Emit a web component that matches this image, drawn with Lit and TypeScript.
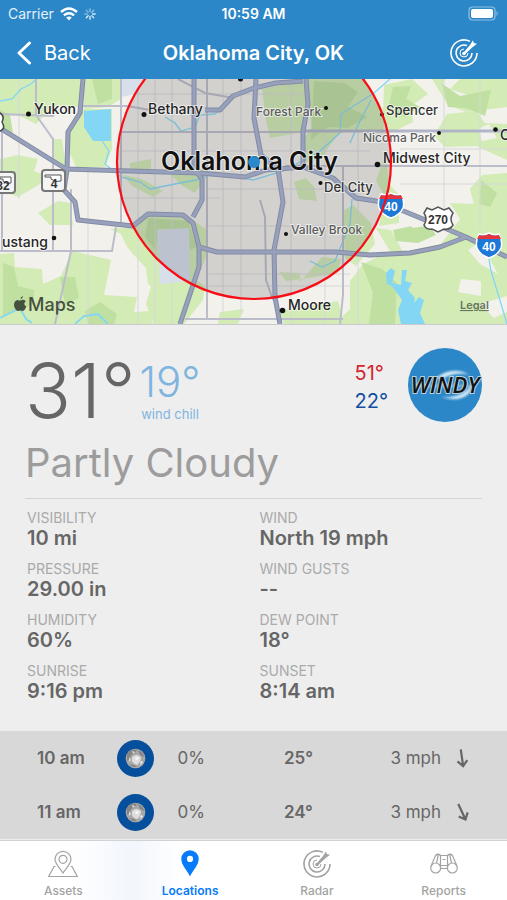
import { LitElement, html, svg, css } from "lit";
import { customElement, property } from "lit/decorators.js";

const radar = svg`
  <path d="M28 15A13 13 0 1 1 21 3.400" fill="none" stroke="currentColor" stroke-width="1.600"/>
  <path d="M23 15A8 8 0 1 1 18 7.600" fill="none" stroke="currentColor" stroke-width="1.600"/>
  <path d="M19 15A4 4 0 1 1 15 11" fill="none" stroke="currentColor" stroke-width="1"/>
  <path d="M14 15.200 21 7 24 2.300 24.800 5 28 5.800 23.500 9.300 15.600 16.500Z" fill="currentColor"/>
  <circle cx="15" cy="15.500" r="1.800" fill="currentColor"/>`;

const icons: Record<string, unknown> = {
  assets: svg`<g fill="none" stroke="currentColor" stroke-width="1.200">
    <path d="M15 24C12 19 7 15 7 10.300a8 8 0 0 1 16 0C23 15 18 19 15 24Z"/>
    <circle cx="15" cy="10.300" r="4"/>
    <path d="M7.500 17.500H6L.700 27.500H29.300L24 17.500H22.500"/></g>`,
  locations: svg`<path fill="currentColor" fill-rule="evenodd" d="M15 27.500C12.500 21.500 6.300 16.500 6.300 10a8.700 8.700 0 0 1 17.400 0C23.700 16.500 17.500 21.500 15 27.500ZM15 13a3.100 3.100 0 1 0 0-6.200A3.100 3.100 0 0 0 15 13Z"/>`,
  radar,
  reports: svg`<g fill="none" stroke="currentColor" stroke-width="1.200">
    <circle cx="6.700" cy="19" r="5"/><circle cx="23.300" cy="19" r="5"/>
    <path d="M2.300 16.500 6.500 6.500Q9 4 11.500 6.500V20M27.700 16.500 23.500 6.500Q21 4 18.500 6.500V20M11.500 6.500h7M11.500 19.500h7M11.500 16.500h7M9.300 6 7.500 14M20.700 6 22.500 14M13.500 10.500h3"/></g>`,
};

const highways = [
  "M0 49 66 90 130 92 200 94 245 98 266 91 303 88 333 99 356 119 376 122 406 133 466 158 507 178",
  "M83 0 80 34 68 53 67 91 64 111 75 123 78 141 133 147 148 135 183 136 193 144 199 168V188L180 245",
  "M194 0V90L202 100V121L193 138M205 31H220L233 17 254 9 276 4 303 2",
  "M256 0 254 39 261 76 278 90 283 123 274 171 275 218 280 245M306 0 308 26 303 52V88M199 168 217 173H336L370 176 410 174 440 168 466 158",
];

@customElement("area-map")
class AreaMap extends LitElement {
  static styles = css`
    :host { display: block; border-bottom: 1px solid #c9cbcc; }
    .map { display: block; width: 100%; height: auto; font-family: Inter, "Liberation Sans", sans-serif; }
    .town { font-size: 14px; font-weight: 500; fill: #252525; }
    .small { font-size: 12px; font-weight: 500; fill: #5c5c5c; }
    .mid { font-size: 13px; font-weight: 500; fill: #333; }
    .city { font-size: 25px; font-weight: 600; fill: #111; }
    .halo { paint-order: stroke; stroke: #ffffff; stroke-opacity: 0.6; stroke-width: 2px; }
    .brand { font-size: 18px; font-weight: 500; fill: #45513f; }
    .legal { font-size: 11px; font-weight: 600; fill: #68755f; text-decoration: underline; }
    .shield { font-family: "Liberation Sans", sans-serif; font-size: 12px; font-weight: 700; fill: #fff; text-anchor: middle; }
    .dark { fill: #333; }
  `;

  interstate(x: number, y: number) {
    return svg`<g transform="translate(${x} ${y})">
      <path d="M-10-11Q-5-9 0-12Q5-9 10-11Q14-3 12 3Q9 10 0 13Q-9 10-12 3Q-14-3-10-11Z" fill="#1d79d8" stroke="#fff" stroke-width="1.500"/>
      <path d="M-10-10Q-5-8 0-11Q5-8 10-10L12-6H-12Z" fill="#e5343c"/>
      <text class="shield" y="6">40</text></g>`;
  }

  render() {
    return html`<svg class="map" viewBox="0 0 507 245" role="img" aria-label="Map of Oklahoma City">
      <rect width="507" height="245" fill="#f2f1ec"/>
      <g fill="#d3ebb5">
        <path d="M0 0H84L79 30 54 27 36 45 20 37 0 35Z"/>
        <path d="M83 0H121V20L108 28 84 30Z"/>
        <path d="M81 30H112V70L105 88 76 88 69 72 70 54Z"/>
        <path d="M52 60H62L66 88 55 84Z"/>
        <path d="M0 80 18 76 38 80 34 92 45 96 40 105 18 118 0 111Z"/>
        <path d="M38 134 58 122 70 124 73 146 50 146Z"/>
        <path d="M0 175 14 174 15 188 42 190 43 205 61 197 72 172 111 181 104 216 137 218 134 233 151 232 153 245H0Z"/>
        <path d="M110 150 135 148 152 134 188 138 206 150V178L196 201 205 207 203 221 184 245H154L146 225 151 208 139 193 121 155Z"/>
        <path d="M130 84 151 80V90L130 93ZM123 96 142 100 163 112 153 118 132 107ZM165 90H206V98L195 114 181 106Z"/>
        <path d="M306 0H432L448 26 466 33 507 28V0H460L450 10 480 20 460 26 441 8 445 0Z"/>
        <path d="M262 10 303 2 309 28 304 53 270 59 266 42Z"/>
        <path d="M306 0 365 0 385 34 383 54 355 50 338 55 321 79 306 84 300 66 311 49Z"/>
        <path d="M384 6 412 0 428 15 411 27 413 43 388 55 383 35Z"/>
        <path d="M447 35 476 32 485 44 507 45V81L476 67 445 68 434 57Z"/>
        <path d="M385 76 390 106 399 116 399 144 379 147 384 116 376 102Z"/>
        <path d="M294 103 306 99 314 108 317 122 299 120ZM470 110 482 96 507 94V245H335L350 230V202L363 185 390 172 376 149 391 151 403 173 441 165 460 140 450 124 474 125Z"/>
        <path d="M343 132 353 126 371 144 375 165 356 187 345 179ZM279 193 300 194 300 203 322 178 341 180 338 194 301 200 286 202Z"/>
        <path d="M280 232 321 225 338 222 345 245H284ZM220 233 244 230 238 245H218Z"/>
      </g>
      <g fill="#bfe0a0">
        <path d="M92 0H112V20L98 25ZM314 2 344 4 358 13 348 28 368 38 348 49 328 48 311 61ZM60 198H75L79 219 65 225ZM3 184 14 188 18 207 34 211 34 225 3 238ZM85 232 100 223 117 235 114 245H88ZM148 139 188 142 197 168 190 171 187 150 158 150 156 172 145 158ZM0 31 10 36 14 61 2 50ZM393 8 411 7 406 20 420 28 405 38 388 31ZM441 4 460 17 491 11 485 37 466 29 448 28Z"/>
        <path d="M393 151 427 144 436 156 418 164 396 162ZM481 101 497 114 490 128 479 125ZM361 183 382 190 397 204 395 245H369L373 214Z"/>
      </g>
      <g fill="#f2f1ec">
        <path d="M57 28H79V37L68 51 53 48ZM468 171 480 163 487 175 498 195 480 185ZM461 200 481 202 481 217 458 213ZM480 225 507 217 507 233 494 239ZM121 160 132 174 146 189 149 216 109 210ZM405 142 419 137 426 147 413 149Z"/>
        <path d="M478 50 489 45 497 59 482 62Z"/>
      </g>
      <g fill="none" stroke="#d8d7dc" stroke-width="1">
        <path d="M138 0V245M155 0V245M172 0V245M223 0V235M241 0V235M291 0V245M325 50V245M358 50V245M444 0V130M480 0V150M121 15H310M121 72H370M205 110H340M205 147H345M205 195H350M205 207H350M121 119H220M400 70H507M400 105H507M19 0V120M88 88V245"/>
      </g>
      <path d="M121 0H145L135 15 121 18ZM157 151 189 149 190 202 160 205Z" fill="#d7dfeb"/>
      <g fill="#83d7f5">
        <path d="M84 32 111 30 111 62H93L84 48Z"/>
        <path d="M386 194 391 189 395 192 392 204 401 206 402 191 407 191 405 202 412 204 408 211 415 219 414 224 419 218 424 221 420 234 425 245H401L398 231 402 221 392 207 387 205Z"/>
      </g>
      <g fill="none" stroke="#83d7f5">
        <path d="M0 22 12 20 21 10 31 5 36 0M102 62 109 72 105 85 121 98 140 103 150 110 180 104 196 101 215 94 238 98 253 101 283 92 319 73 340 54 341 35 374 14 390 0M165 38 175 44 181 52 195 48 200 36 215 35 224 25M310 182 322 188 335 182 343 162 350 145 352 120M371 21 357 48 350 64M488 174 491 192 499 218 507 245" stroke-width="1.300"/>
        <path d="M0 239 8 235 20 229 26 240 32 244M75 245 84 237 98 235 108 245" stroke-width="1.800"/>
      </g>
      <g fill="none" stroke="#bcbdca" stroke-width="2">
        <path d="M0 35 54 37M36 0V36L53 60V172M2 50V172M0 172H112L116 148M71 110V172L55 245M121 0V145M207 0V240M185 240H343M343 87V216L340 245M121 53H304M285 87H507M260 121 265 138 266 201 273 221M178 0 205 14 234 19M80 27H127L150 31"/>
      </g>
      <path d="M304 52H507" stroke="#b1b5c8" stroke-width="3"/>
      <circle cx="254" cy="83" r="137" fill="#55555a" fill-opacity="0.200"/>
      <g fill="none" stroke-linejoin="round">
        <g stroke="#838ba5" stroke-width="5">${highways.map((d) => svg`<path d=${d}/>`)}</g>
        <g stroke="#98a1bb" stroke-width="3">${highways.map((d) => svg`<path d=${d}/>`)}</g>
      </g>
      <g fill="#f4f4f4" stroke="#777" stroke-width="2">
        <rect x="42" y="91" width="23" height="21" rx="3"/><rect x="-9" y="93" width="24" height="21" rx="3"/>
        <path d="M-8 34 0 34Q5 37 2 43Q6 50 0 52H-8Z" fill="#fff" stroke="#444" stroke-width="1.500"/>
      </g>
      <path d="M45 96H61V102Q56 104 51 100V98H45ZM0 98H11V104Q7 106 3 102V100H0Z" fill="#fff" stroke="#555" stroke-width="1"/>
      <text class="shield dark" x="54" y="109">4</text>
      <text class="shield dark" x="3" y="111">32</text>
      ${this.interstate(391, 126)} ${this.interstate(489, 166)}
      <path d="M427 129 432 131 438 128 444 131 449 129 453 134Q449 140 453 146Q450 151 444 150L438 153 432 150Q426 151 424 146Q428 140 424 134Z" fill="#fff" stroke="#555" stroke-width="1.500"/>
      <text class="shield dark" x="438" y="145">270</text>
      <g fill="#111">
        <circle cx="28.500" cy="35" r="2.500"/><circle cx="144" cy="35.500" r="2.500"/><circle cx="240.500" cy="0" r="2.500"/>
        <circle cx="326" cy="29" r="2"/><circle cx="382" cy="35.500" r="2"/><circle cx="439" cy="54" r="2"/><circle cx="495.500" cy="50.500" r="2.300"/>
        <circle cx="377.500" cy="85.500" r="2.800"/><circle cx="320.500" cy="104" r="2"/><circle cx="54" cy="159" r="2.300"/>
        <circle cx="286" cy="155" r="2"/><circle cx="282.500" cy="231.500" r="2.800"/>
      </g>
      <g class="halo">
        <text class="town" x="34" y="35">Yukon</text>
        <text class="town" x="148" y="35">Bethany</text>
        <text class="small" x="256" y="37">Forest Park</text>
        <text class="mid" x="386" y="36">Spencer</text>
        <text class="small" x="363" y="63">Nicoma Park</text>
        <text class="town" x="383" y="84">Midwest City</text>
        <text class="mid" x="324" y="113">Del City</text>
        <text class="town" x="500" y="61">C</text>
        <text class="town" x="2" y="168">ustang</text>
        <text class="small" x="291" y="155">Valley Brook</text>
        <text class="town" x="288" y="231">Moore</text>
        <text class="city" x="161" y="91">Oklahoma City</text>
      </g>
      <circle cx="254" cy="83" r="6" fill="#2b88ca"/>
      <circle cx="254" cy="83" r="137" fill="none" stroke="#f80d16" stroke-width="2.200"/>
      <path transform="translate(13 217)" fill="#45513f" d="M7.500 3.600Q7.500.800 9.800 0 10 2.600 7.500 3.600ZM4.500 3.900Q6.500 4.800 7.800 4.400 10.500 3 12.800 5.200 9.500 7.800 13.300 10.800 11.500 15 9.600 15 7.300 14 5.300 15 2.600 15 1.100 10.300.500 4.800 4.500 3.900Z"/>
      <text class="brand" x="28" y="232">Maps</text>
      <a href="#legal"><text class="legal" x="460" y="230">Legal</text></a>
    </svg>`;
  }
}

@customElement("windy-badge")
class WindyBadge extends LitElement {
  static styles = css`
    :host { display: block; }
    .badge { display: block; width: 74px; height: 74px; }
    .word { font: italic 600 22px "Open Sans", "Noto Sans", sans-serif; fill: #111; text-anchor: middle; }
    .glow { fill: #c6dcea; stroke: #c6dcea; stroke-width: 3px; }
  `;
  render() {
    return html`<svg class="badge" viewBox="0 0 74 74" role="img" aria-label="Windy">
      <defs><filter id="soft" x="-20%" y="-40%" width="140%" height="180%"><feGaussianBlur stdDeviation="1"/></filter></defs>
      <circle cx="37" cy="37" r="37" fill="#2b87c8"/>
      <g filter="url(#soft)">
        <path d="M28 30Q44 17 62 27Q48 23 34 31ZM32 49Q55 51 65 35Q62 57 32 49Z" fill="#d5e8f4"/>
        <path class="glow" d="M6 38H68" opacity="0.500"/>
      </g>
      <text class="word" x="37" y="45" stroke="#b9d2e2" stroke-width="2" paint-order="stroke">WINDY</text>
    </svg>`;
  }
}

@customElement("moon-icon")
class MoonIcon extends LitElement {
  static styles = css`
    :host { display: block; }
    .moon { display: block; width: 37px; height: 37px; }
  `;
  render() {
    return html`<svg class="moon" viewBox="0 0 37 37" role="img" aria-label="Clear night">
      <circle cx="18.500" cy="18.500" r="18.500" fill="#064f9c"/>
      <circle cx="18.500" cy="18.500" r="9.800" fill="#a8a8a8"/>
      <path d="M10 14Q14 8 20 10 18 14 14 15 13 20 10 21ZM21 10Q27 13 27 17L23 15ZM12 24 17 25 20 27 16 27Z" fill="#858585"/>
      <path d="M15 17Q19 13 24 17 24 22 20 25 16 24 15 21ZM12 17 14 20 12 22ZM15 11 18 12 16 14Z" fill="#dedede"/>
      <path d="M18 18 21 17 22 19 19 20ZM24 21 26 22 23 25Z" fill="#fafafa"/>
    </svg>`;
  }
}

@customElement("tab-bar")
class TabBar extends LitElement {
  @property() active = "locations";
  static styles = css`
    :host { display: block; }
    .bar { display: grid; grid-template-columns: repeat(4, 1fr); border-top: 1px solid #d2d2d2; background: linear-gradient(90deg, #fff 14%, #f2f6fd 26%, #fff 36%); }
    .tab { display: flex; flex-direction: column; align-items: center; gap: 4px; height: 59px; padding: 8px 0 0; border: 0; background: none; color: #a3a3a3; font: 500 12px/16px Inter, "Liberation Sans", sans-serif; }
    .on { color: #087bfa; font-weight: 600; }
    .icon { width: 30px; height: 30px; }
  `;
  render() {
    const tabs = ["Assets", "Locations", "Radar", "Reports"];
    return html`<nav class="bar">${tabs.map((t) => {
      const key = t.toLowerCase();
      return html`<button class="tab ${key === this.active ? "on" : ""}">
        <svg class="icon" viewBox="0 0 30 30" aria-hidden="true">${icons[key]}</svg>${t}</button>`;
    })}</nav>`;
  }
}

@customElement("app-root")
class AppRoot extends LitElement {
  static styles = css`
    :host { display: flex; flex-direction: column; min-height: 100vh; background: #eee; color: #666; font-family: Inter, "Liberation Sans", sans-serif; }
    .top { background: #2b87c8; color: #fff; }
    .status, .nav { display: grid; grid-template-columns: 1fr auto 1fr; align-items: center; }
    .status { height: 27px; padding: 0 8px; font-size: 14px; line-height: 20px; }
    .carrier { display: flex; align-items: center; gap: 6px; color: #e3f0f9; }
    .clock { font-weight: 600; }
    .end { justify-self: end; }
    .wifi, .spin { display: block; }
    .nav { height: 52px; padding: 0 16px; }
    .back, .target { display: flex; align-items: center; border: 0; padding: 0; background: none; color: inherit; }
    .back { justify-self: start; gap: 12px; font: 400 20px/24px Inter, "Liberation Sans", sans-serif; }
    .target { margin-right: 12px; }
    .title { margin: 0; font-size: 20px; line-height: 24px; font-weight: 600; }
    .weather { padding: 23px 25px 29px; }
    .now { display: flex; align-items: center; height: 84px; }
    .temp { font-size: 76px; line-height: 84px; font-weight: 300; }
    .feels { margin-left: 4px; color: #7eb5df; text-align: center; }
    .chill { font-size: 42px; line-height: 48px; font-weight: 300; }
    .caption { font-size: 13px; line-height: 16px; }
    .today { display: flex; align-items: center; align-self: flex-start; gap: 20px; margin-left: auto; }
    .range { padding-top: 4px; font-size: 20px; line-height: 28px; }
    .high { color: #d22630; }
    .low { color: #124f9f; }
    .sky { margin: 0; font-size: 40px; line-height: 62px; font-weight: 400; color: #9c9c9c; }
    .rule { margin: 4px 0 10px; border: 0; border-top: 1px solid #d4d4d4; }
    .stats { display: grid; grid-template-columns: 1fr 1fr; gap: 11px 10px; margin: 0 0 0 2px; }
    .label { font-size: 14px; line-height: 18px; color: #aaa; }
    .value { margin: 0; font-size: 20px; line-height: 22px; font-weight: 600; }
    .hours { width: 100%; border-collapse: collapse; table-layout: fixed; background: #d8d8d8; font-size: 17px; line-height: 24px; }
    .hours th, .hours td { height: 54px; padding: 0; text-align: left; font-weight: 400; }
    .hours .hour { width: 23%; padding-left: 37px; box-sizing: border-box; font-weight: 600; }
    .hours .pic { width: 12%; }
    .hours .rain { width: 21%; }
    .hours .deg { width: 21%; font-weight: 600; }
    .hours .wind { width: 12%; white-space: nowrap; }
    .arrow { display: block; width: 22px; height: 22px; }
    .tabs { margin-top: auto; }
  `;

  stats = [
    ["VISIBILITY", "10 mi"], ["WIND", "North 19 mph"],
    ["PRESSURE", "29.00 in"], ["WIND GUSTS", "--"],
    ["HUMIDITY", "60%"], ["DEW POINT", "18°"],
    ["SUNRISE", "9:16 pm"], ["SUNSET", "8:14 am"],
  ];
  hours = [
    { time: "10 am", rain: "0%", temp: "25°", wind: "3 mph", turn: -8 },
    { time: "11 am", rain: "0%", temp: "24°", wind: "3 mph", turn: -25 },
  ];

  render() {
    return html`
      <header class="top">
        <div class="status">
          <span class="carrier">Carrier
            <svg class="wifi" width="18" height="14" viewBox="0 0 18 14" aria-hidden="true">
              <g fill="none" stroke="#fff" stroke-width="2.400"><path d="M1 5Q9-2 17 5M3.900 8.300Q9 4 14.100 8.300"/></g>
              <path d="M6.200 10.500Q9 8.500 11.800 10.500L9 13.500Z" fill="#fff"/>
            </svg>
            <svg class="spin" width="12" height="12" viewBox="0 0 12 12" aria-hidden="true" stroke="#fff" stroke-width="1.300" stroke-linecap="round">
              <path d="M6 .800V3.500M9.700 2.300 7.800 4.200" opacity="0.500"/><path d="M11.200 6H8.500M9.700 9.700 7.800 7.800" opacity="0.800"/>
              <path d="M6 11.200V8.500M2.300 9.700 4.200 7.800" opacity="0.900"/><path d="M.800 6H3.500M2.300 2.300 4.200 4.200" opacity="0.400"/>
            </svg>
          </span>
          <span class="clock">10:59 AM</span>
          <svg class="end" width="31" height="15" viewBox="0 0 31 15" aria-hidden="true">
            <rect x="1" y="1" width="26" height="13" rx="3.500" fill="none" stroke="#8fc0e3" stroke-width="1.200"/>
            <rect x="3" y="3" width="22" height="9" rx="2" fill="#fff"/><path d="M28.500 5Q31 7.500 28.500 10Z" fill="#8fc0e3"/>
          </svg>
        </div>
        <div class="nav">
          <button class="back">
            <svg width="16" height="24" viewBox="0 0 16 24" aria-hidden="true"><path d="M13.500 2 3 12 13.500 22" fill="none" stroke="#fff" stroke-width="3" stroke-linecap="round" stroke-linejoin="round"/></svg>Back
          </button>
          <h1 class="title">Oklahoma City, OK</h1>
          <button class="target end" aria-label="Radar"><svg width="30" height="30" viewBox="0 0 30 30">${radar}</svg></button>
        </div>
      </header>
      <area-map></area-map>
      <main>
        <section class="weather">
          <div class="now">
            <div class="temp">31°</div>
            <div class="feels"><div class="chill">19°</div><div class="caption">wind chill</div></div>
            <div class="today">
              <div class="range"><div class="high">51°</div><div class="low">22°</div></div>
              <windy-badge></windy-badge>
            </div>
          </div>
          <h2 class="sky">Partly Cloudy</h2>
          <hr class="rule" />
          <dl class="stats">${this.stats.map(([k, v]) => html`<div><dt class="label">${k}</dt><dd class="value">${v}</dd></div>`)}</dl>
        </section>
        <table class="hours" aria-label="Hourly forecast"><tbody>${this.hours.map((h) => html`<tr>
          <th class="hour" scope="row">${h.time}</th>
          <td class="pic"><moon-icon></moon-icon></td>
          <td class="rain">${h.rain}</td>
          <td class="deg">${h.temp}</td>
          <td class="wind">${h.wind}</td>
          <td><svg class="arrow" viewBox="0 0 20 20" role="img" aria-label="Wind direction">
            <path transform="rotate(${h.turn} 10 10)" d="M10 2V17M5.500 12.500 10 17.500 14.500 12.500" fill="none" stroke="#666" stroke-width="2"/></svg></td>
        </tr>`)}</tbody></table>
      </main>
      <tab-bar class="tabs" active="locations"></tab-bar>`;
  }
}
